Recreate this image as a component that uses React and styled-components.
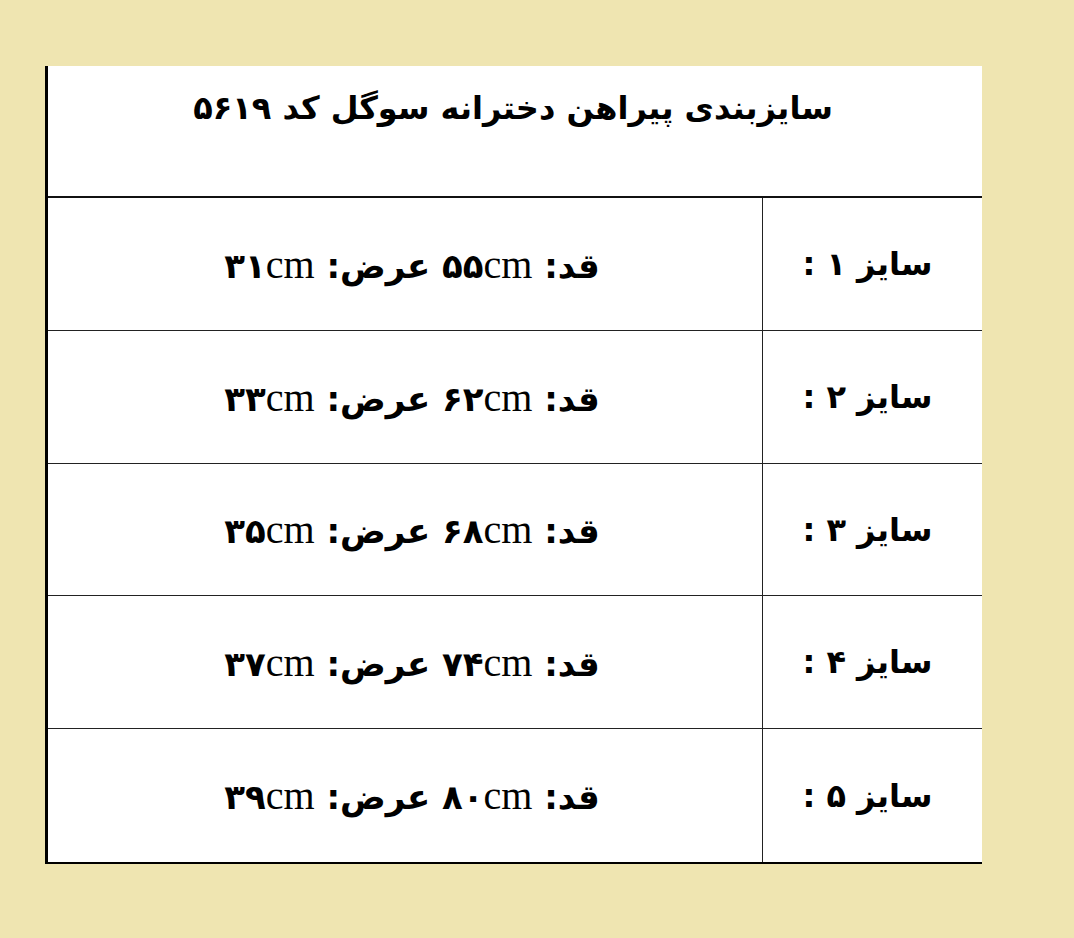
import React from 'react';
import styled, { createGlobalStyle } from 'styled-components';

const GlobalStyle = createGlobalStyle`
  html, body {
    margin: 0;
    padding: 0;
    background: #EFE5B1;
  }
  body {
    font-family: "DejaVu Sans", "Noto Sans", sans-serif;
  }
`;

const Page = styled.div`
  width: 1074px;
  height: 938px;
  padding-top: 66px;
  padding-left: 45px;
  box-sizing: border-box;
`;

const Sheet = styled.div`
  width: 937px;
  background: #ffffff;
  border-left: 3px solid #000;
  border-bottom: 2px solid #000;
  box-sizing: border-box;
`;

const Header = styled.div`
  height: 132px;
  border-bottom: 2px solid #111;
  box-sizing: border-box;
  display: flex;
  justify-content: center;
  padding-top: 19px;
  padding-right: 4px;
`;

const Title = styled.h1`
  margin: 0;
  font-family: "DejaVu Sans", sans-serif;
  font-weight: 700;
  font-size: 32px;
  line-height: 46px;
  color: #000;
`;

const Row = styled.div`
  display: grid;
  grid-template-columns: 220px 1fr;
  height: ${p => p.h}px;
  border-bottom: ${p => (p.last ? 'none' : '1.5px solid #222')};
  box-sizing: border-box;
`;

const Cell = styled.div`
  display: flex;
  align-items: center;
  justify-content: center;
  font-family: "DejaVu Sans", sans-serif;
  font-weight: 700;
  font-size: ${p => p.size}px;
  color: #000;
  border-left: ${p => (p.divider ? '1px solid #222' : 'none')};
  padding-left: ${p => p.pl || 0}px;
  padding-right: ${p => p.pr || 0}px;
`;

const Unit = styled.span`
  font-family: "Liberation Serif", serif;
  font-weight: 400;
  font-size: 40px;
`;

const rows = [
  { n: '۱', h: '۵۵', w: '۳۱', ht: 133 },
  { n: '۲', h: '۶۲', w: '۳۳', ht: 133 },
  { n: '۳', h: '۶۸', w: '۳۵', ht: 132 },
  { n: '۴', h: '۷۴', w: '۳۷', ht: 133 },
  { n: '۵', h: '۸۰', w: '۳۹', ht: 133 },
];

export default function App() {
  return (
    <>
      <GlobalStyle />
      <Page>
        <Sheet>
          <Header dir="rtl">
            <Title>سایزبندی پیراهن دخترانه سوگل کد ۵۶۱۹</Title>
          </Header>
          {rows.map((r, i) => (
            <Row key={i} dir="rtl" h={r.ht} last={i === rows.length - 1}>
              <Cell divider size={32} pr={10}>سایز {r.n} :</Cell>
              <Cell size={34} pl={14}>
                <span>
                  قد: {r.h}<Unit>cm</Unit> عرض: {r.w}<Unit>cm</Unit>
                </span>
              </Cell>
            </Row>
          ))}
        </Sheet>
      </Page>
    </>
  );
}
